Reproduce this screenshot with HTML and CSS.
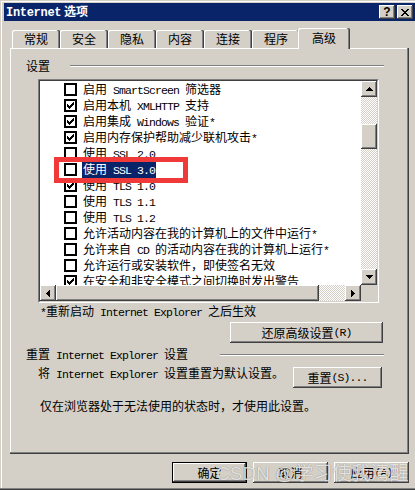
FILE: index.html
```html
<!DOCTYPE html>
<html lang="zh-CN">
<head>
<meta charset="UTF-8">
<title>Internet 选项</title>
<link rel="stylesheet" href="styles.css">
</head>
<body>
<div class="window">
  <div class="titlebar">
    <span class="title"><span class="en">Internet</span> 选项</span>
    <div class="caption-buttons">
      <span class="caption-btn help">?</span>
      <span class="caption-btn">
        <svg width="8" height="7" viewBox="0 0 8 7"><path d="M0 0h2v1H0zM6 0h2v1H6zM1 1h2v1H1zM5 1h2v1H5zM2 2h4v1H2zM3 3h2v1H3zM2 4h4v1H2zM1 5h2v1H1zM5 5h2v1H5zM0 6h2v1H0zM6 6h2v1H6z"/></svg>
      </span>
    </div>
  </div>

  <div class="dialog">
    <div class="tabs">
      <div class="tab">常规</div>
      <div class="tab">安全</div>
      <div class="tab">隐私</div>
      <div class="tab">内容</div>
      <div class="tab">连接</div>
      <div class="tab">程序</div>
      <div class="tab active">高级</div>
    </div>

    <div class="panel">
      <div class="group-head"><span>设置</span><span class="etch"></span></div>

      <div class="listbox">
        <div class="listbox-inner">
          <div class="items">
            <div class="item"><span class="check"></span><span class="label">启用<span class="en"> SmartScreen </span>筛选器</span></div>
            <div class="item"><span class="check"><svg width="13" height="13" viewBox="0 0 13 13"><path d="M3 5H4V6H5V7H6V6H7V5H8V4H9V3H10V6H9V7H8V8H7V9H6V10H5V9H4V8H3Z"/></svg></span><span class="label">启用本机<span class="en"> XMLHTTP </span>支持</span></div>
            <div class="item"><span class="check"><svg width="13" height="13" viewBox="0 0 13 13"><path d="M3 5H4V6H5V7H6V6H7V5H8V4H9V3H10V6H9V7H8V8H7V9H6V10H5V9H4V8H3Z"/></svg></span><span class="label">启用集成<span class="en"> Windows </span>验证<span class="en">*</span></span></div>
            <div class="item"><span class="check"><svg width="13" height="13" viewBox="0 0 13 13"><path d="M3 5H4V6H5V7H6V6H7V5H8V4H9V3H10V6H9V7H8V8H7V9H6V10H5V9H4V8H3Z"/></svg></span><span class="label">启用内存保护帮助减少联机攻击<span class="en">*</span></span></div>
            <div class="item"><span class="check"></span><span class="label">使用<span class="en"> SSL 2.0</span></span></div>
            <div class="item selected"><span class="check"></span><span class="label">使用<span class="en"> SSL 3.0</span></span></div>
            <div class="item"><span class="check"><svg width="13" height="13" viewBox="0 0 13 13"><path d="M3 5H4V6H5V7H6V6H7V5H8V4H9V3H10V6H9V7H8V8H7V9H6V10H5V9H4V8H3Z"/></svg></span><span class="label">使用<span class="en"> TLS 1.0</span></span></div>
            <div class="item"><span class="check"></span><span class="label">使用<span class="en"> TLS 1.1</span></span></div>
            <div class="item"><span class="check"></span><span class="label">使用<span class="en"> TLS 1.2</span></span></div>
            <div class="item"><span class="check"></span><span class="label">允许活动内容在我的计算机上的文件中运行<span class="en">*</span></span></div>
            <div class="item"><span class="check"></span><span class="label">允许来自<span class="en"> CD </span>的活动内容在我的计算机上运行<span class="en">*</span></span></div>
            <div class="item"><span class="check"></span><span class="label">允许运行或安装软件，即使签名无效</span></div>
            <div class="item"><span class="check"><svg width="13" height="13" viewBox="0 0 13 13"><path d="M3 5H4V6H5V7H6V6H7V5H8V4H9V3H10V6H9V7H8V8H7V9H6V10H5V9H4V8H3Z"/></svg></span><span class="label">在安全和非安全模式之间切换时发出警告</span></div>
            <div class="mark"></div>
          </div>

          <div class="vscroll">
            <span class="sb-btn"><svg width="7" height="4" viewBox="0 0 7 4"><path d="M3 0h1v1h1v1h1v1h1v1H0V3h1V2h1V1h1z"/></svg></span>
            <span class="thumb vthumb"></span>
            <span class="sb-btn end"><svg width="7" height="4" viewBox="0 0 7 4"><path d="M0 0h7v1H6v1H5v1H4v1H3V3H2V2H1V1H0z"/></svg></span>
          </div>

          <div class="hscroll">
            <span class="sb-btn"><svg width="4" height="7" viewBox="0 0 4 7"><path d="M3 0h1v7H3V6H2V5H1V4H0V3h1V2h1V1h1z"/></svg></span>
            <span class="thumb hthumb"></span>
            <span class="sb-btn end"><svg width="4" height="7" viewBox="0 0 4 7"><path d="M0 0h1v1h1v1h1v1h1v1H3v1H2v1H1v1H0z"/></svg></span>
          </div>

          <div class="corner"></div>
        </div>
      </div>

      <div class="note"><span class="en">*</span>重新启动<span class="en"> Internet Explorer </span>之后生效</div>

      <div class="restore-row">
        <span class="button restore">还原高级设置<span class="en">(R)</span></span>
      </div>

      <div class="group-head reset"><span>重置<span class="en"> Internet Explorer </span>设置</span><span class="etch"></span></div>

      <div class="reset-row">
        <span class="text">将<span class="en"> Internet Explorer </span>设置重置为默认设置。</span>
        <span class="button reset-btn">重置<span class="en">(S)...</span></span>
      </div>

      <div class="info">仅在浏览器处于无法使用的状态时，才使用此设置。</div>
    </div>

    <div class="footer">
      <span class="button default">确定</span>
      <span class="button">取消</span>
      <span class="button">应用<span class="en">(A)</span></span>
    </div>
  </div>

  <div class="watermark">CSDN @学习使我清醒</div>
</div>
</body>
</html>
```

FILE: styles.css
```css
* {
  box-sizing: border-box;
}
body {
  margin: 0;
  background: #fff;
  color: #000;
  font-family: "Noto Sans CJK SC", sans-serif;
  font-size: 12px;
  overflow: hidden;
}
.en {
  font-family: "Liberation Mono", monospace;
  font-size: 11.5px;
  letter-spacing: -0.9px;
}
svg {
  display: block;
  shape-rendering: crispEdges;
}

/* window frame */
.window {
  position: relative;
  width: 415px;
  height: 490px;
  padding: 3px 0 0 4px;
  background: #d4d0c8;
  box-shadow: inset 0 -1px #404040, inset 0 -2px #808080, inset 1px 1px #d4d0c8, inset 2px 2px #fff;
}
.titlebar {
  display: flex;
  align-items: center;
  justify-content: space-between;
  height: 18px;
  padding: 0 2px;
  background: #0a246a;
  color: #fff;
  font-weight: bold;
  line-height: 18px;
}
.title .en {
  font-size: 12px;
  letter-spacing: -0.3px;
}
.caption-buttons {
  display: flex;
  gap: 2px;
}
.caption-btn {
  display: flex;
  align-items: center;
  justify-content: center;
  width: 16px;
  height: 14px;
  background: #d4d0c8;
  color: #000;
  box-shadow: inset -1px -1px #404040, inset 1px 1px #fff, inset -2px -2px #808080, inset 2px 2px #d4d0c8;
}
.caption-btn.help {
  font-family: "Liberation Sans", sans-serif;
  font-size: 12px;
  font-weight: bold;
  line-height: 14px;
}

/* tabs */
.dialog {
  padding: 7px 6px 0 6px;
}
.tabs {
  display: flex;
  align-items: flex-end;
  height: 20px;
  padding-left: 2px;
}
.tab {
  width: 48px;
  height: 18px;
  line-height: 18px;
  text-align: center;
  background: #d4d0c8;
  border-radius: 2px 2px 0 0;
  box-shadow: inset -1px 0 #404040, inset -2px 0 #808080, inset 1px 1px #fff;
}
.tab.active {
  position: relative;
  z-index: 1;
  width: 52px;
  height: 21px;
  line-height: 20px;
  margin: 0 -2px -1px;
}

/* panel */
.panel {
  height: 406px;
  padding: 11px 25px 0 16px;
  box-shadow: inset -1px -1px #404040, inset -2px -2px #808080, inset 1px 1px #fff;
}
.group-head {
  display: flex;
  align-items: center;
  height: 14px;
  line-height: 14px;
  white-space: nowrap;
}
.etch {
  flex: 1;
  height: 2px;
  margin-left: 20px;
  border-top: 1px solid #808080;
  border-bottom: 1px solid #fff;
}
.group-head.reset {
  margin-top: 5px;
}
.group-head.reset .etch {
  margin-left: 32px;
}

/* settings list */
.listbox {
  width: 341px;
  height: 224px;
  margin: 6px 0 0 12px;
  border: 1px solid;
  border-color: #808080 #fff #fff #808080;
}
.listbox-inner {
  display: grid;
  grid-template-columns: 1fr 16px;
  grid-template-rows: 1fr 16px;
  height: 100%;
  border: 1px solid;
  border-color: #404040 #d4d0c8 #d4d0c8 #404040;
  background: #fff;
}
.items {
  position: relative;
  overflow: hidden;
}
.item {
  display: flex;
  align-items: flex-start;
  height: 16px;
  padding-left: 24px;
  white-space: nowrap;
}
.check {
  flex: none;
  width: 13px;
  height: 13px;
  margin-top: 2px;
  background: #fff;
  box-shadow: inset 0 0 0 2px #000;
}
.label {
  margin: 1px 0 0 5px;
  padding: 0 1px;
  line-height: 14px;
}
.item.selected .label {
  background: #0a246a;
  color: #fff;
}
.mark {
  position: absolute;
  left: 14px;
  top: 76px;
  width: 134px;
  height: 26px;
  border: 5px solid #f03a3a;
}

/* scrollbars */
.vscroll,
.hscroll {
  display: flex;
  background: repeating-conic-gradient(#d4d0c8 0 25%, #fff 0 50%) 0 0 / 2px 2px;
}
.vscroll {
  flex-direction: column;
}
.sb-btn,
.thumb,
.corner {
  background: #d4d0c8;
}
.sb-btn,
.thumb,
.button {
  box-shadow: inset -1px -1px #404040, inset 1px 1px #fff, inset -2px -2px #808080, inset 2px 2px #d4d0c8;
}
.sb-btn {
  display: flex;
  flex: none;
  align-items: center;
  justify-content: center;
  width: 16px;
  height: 16px;
}
.sb-btn.end {
  margin: auto 0 0 auto;
}
.vthumb {
  height: 25px;
  margin-top: 27px;
}
.hthumb {
  width: 263px;
}

/* below the list */
.note {
  margin-top: 1px;
  padding-left: 14px;
  line-height: 14px;
}
.restore-row {
  display: flex;
  justify-content: flex-end;
  margin-top: 2px;
  padding-right: 1px;
}
.button {
  display: flex;
  align-items: center;
  justify-content: center;
  height: 21px;
  background: #d4d0c8;
  white-space: nowrap;
}
.restore {
  width: 153px;
}
.reset-row {
  display: flex;
  align-items: flex-start;
  margin-top: 4px;
  padding: 0 2px 0 12px;
  line-height: 14px;
}
.reset-btn {
  width: 89px;
  margin: 1px 0 0 auto;
}
.info {
  margin-top: 11px;
  padding-left: 14px;
  line-height: 14px;
}

/* dialog buttons */
.footer {
  display: flex;
  justify-content: flex-end;
  gap: 6px;
  margin-top: 8px;
}
.footer .button {
  width: 75px;
}
.button.default {
  box-shadow: inset 0 0 0 1px #000, inset -2px -2px #404040, inset 2px 2px #fff, inset -3px -3px #808080;
}

.watermark {
  position: absolute;
  left: 216px;
  top: 458px;
  font-family: "Liberation Sans", "Noto Sans CJK SC", sans-serif;
  font-size: 19px;
  color: rgba(255, 255, 255, 0.8);
  text-shadow: 0 0 1px rgba(0, 0, 0, 0.5);
  white-space: nowrap;
}
```
